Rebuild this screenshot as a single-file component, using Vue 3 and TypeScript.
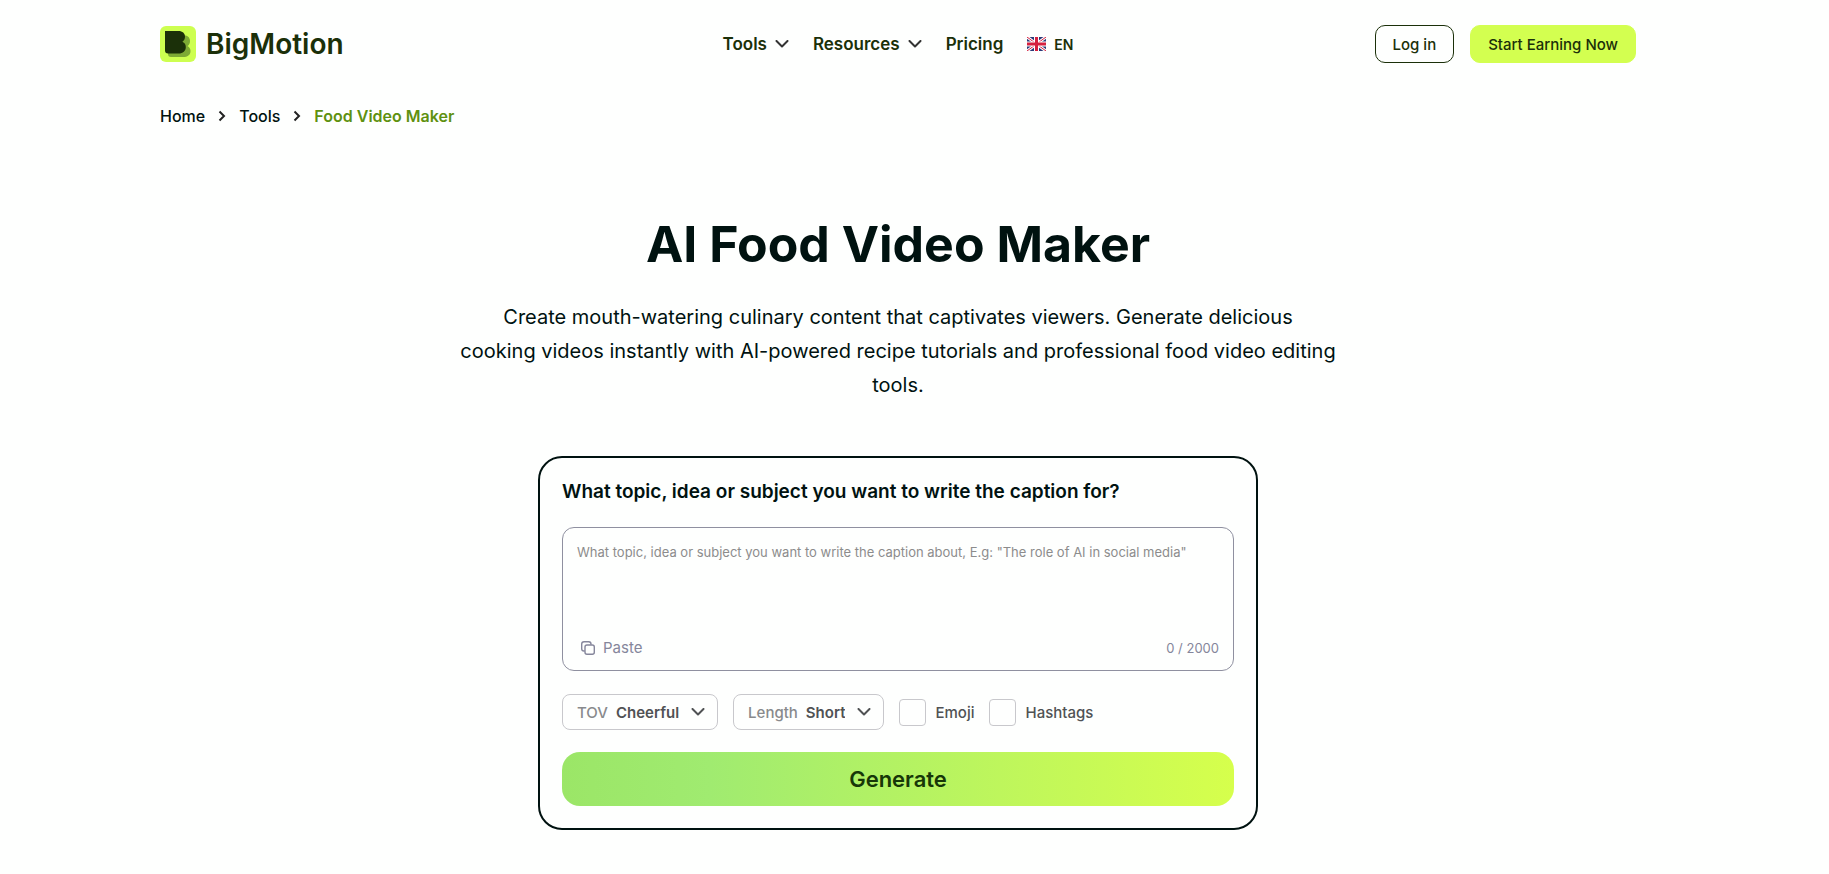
<script setup lang="ts">
import { ref } from 'vue'

const topic = ref('')
const tone = ref('Cheerful')
const captionLength = ref('Short')
const emoji = ref(false)
const hashtags = ref(false)
const maxLength = 2000

const tones = ['Cheerful', 'Formal', 'Witty']
const lengths = ['Short', 'Medium', 'Long']

async function paste() {
  topic.value = (await navigator.clipboard.readText()).slice(0, maxLength)
}
</script>

<template>
  <div class="page">
    <header class="header">
      <a class="brand" href="#">
        <svg class="brand-mark" viewBox="0 0 36 36" aria-hidden="true">
          <rect width="36" height="36" rx="6" fill="#cdff50" />
          <path d="M8 9H22C27 9 30 11 30 15C30 17.500 29 19 27.500 20C29.500 21 30.500 23 30.500 25C30.500 29 27.500 31 23 31H11Q8 31 8 28Z" fill="#7daa35" />
          <path d="M5 5H18.500C22.500 5 25 7.200 25 10.800C25 13 24 14.800 22.400 15.800C24.600 16.800 25.800 18.700 25.800 21C25.800 25 22.900 27.500 18.600 27.500H8Q5 27.500 5 24.500Z" fill="#1b3009" />
        </svg>
        <span>BigMotion</span>
      </a>

      <nav class="nav" aria-label="Main">
        <button class="nav-item" type="button">
          Tools
          <svg class="chevron" viewBox="0 0 14 8" aria-hidden="true"><path d="M1.500 1L7 6.500L12.500 1" /></svg>
        </button>
        <button class="nav-item" type="button">
          Resources
          <svg class="chevron" viewBox="0 0 14 8" aria-hidden="true"><path d="M1.500 1L7 6.500L12.500 1" /></svg>
        </button>
        <a class="nav-item" href="#">Pricing</a>
        <button class="language" type="button">
          <svg class="flag" viewBox="0 0 19 14" aria-hidden="true">
            <rect width="19" height="14" fill="#2b3a78" />
            <path d="M0 0L19 14M19 0L0 14" stroke="#fff" stroke-width="3" />
            <path d="M0 0L19 14M19 0L0 14" stroke="#d5203f" stroke-width="1" />
            <path d="M9.500 0V14M0 7H19" stroke="#fff" stroke-width="5" />
            <path d="M9.500 0V14M0 7H19" stroke="#d5203f" stroke-width="3" />
          </svg>
          EN
        </button>
      </nav>

      <div class="account">
        <a class="button button-outline" href="#">Log in</a>
        <a class="button button-filled" href="#">Start Earning Now</a>
      </div>
    </header>

    <nav class="breadcrumb" aria-label="Breadcrumb">
      <a href="#">Home</a>
      <svg viewBox="0 0 8 12" aria-hidden="true"><path d="M1.500 1.500L6 6L1.500 10.500" /></svg>
      <a href="#">Tools</a>
      <svg viewBox="0 0 8 12" aria-hidden="true"><path d="M1.500 1.500L6 6L1.500 10.500" /></svg>
      <a class="current" href="#" aria-current="page">Food Video Maker</a>
    </nav>

    <main class="main">
      <h1>AI Food Video Maker</h1>
      <p class="lead">
        Create mouth-watering culinary content that captivates viewers. Generate delicious<br />
        cooking videos instantly with AI-powered recipe tutorials and professional food video editing
        tools.
      </p>

      <form class="card" @submit.prevent>
        <label class="card-title" for="topic">What topic, idea or subject you want to write the caption for?</label>

        <div class="editor">
          <textarea
            id="topic"
            v-model="topic"
            :maxlength="maxLength"
            placeholder="What topic, idea or subject you want to write the caption about, E.g: &quot;The role of AI in social media&quot;"
          ></textarea>
          <div class="editor-footer">
            <button class="paste" type="button" @click="paste">
              <svg viewBox="0 0 14 14" aria-hidden="true">
                <rect x="4" y="4" width="9.300" height="9.300" rx="2" />
                <path d="M3.800 10H3Q.7 10 .7 7.700V3Q.7 .7 3 .7H7.700Q10 .7 10 3V3.800" />
              </svg>
              Paste
            </button>
            <span class="count">{{ topic.length }} / {{ maxLength }}</span>
          </div>
        </div>

        <div class="options">
          <div class="dropdown">
            <label for="tone">TOV</label>
            <select id="tone" v-model="tone">
              <option v-for="item in tones" :key="item">{{ item }}</option>
            </select>
            <svg class="chevron" viewBox="0 0 14 8" aria-hidden="true"><path d="M1.500 1L7 6.500L12.500 1" /></svg>
          </div>
          <div class="dropdown">
            <label for="length">Length</label>
            <select id="length" v-model="captionLength">
              <option v-for="item in lengths" :key="item">{{ item }}</option>
            </select>
            <svg class="chevron" viewBox="0 0 14 8" aria-hidden="true"><path d="M1.500 1L7 6.500L12.500 1" /></svg>
          </div>
          <label class="check"><input v-model="emoji" type="checkbox" />Emoji</label>
          <label class="check"><input v-model="hashtags" type="checkbox" />Hashtags</label>
        </div>

        <button class="generate" type="submit">Generate</button>
      </form>
    </main>
  </div>
</template>

<style>
body {
  margin: 0;
  background: #fefffe;
}
</style>

<style scoped>
.page {
  box-sizing: border-box;
  padding: 24px 193px 40px 160px;
  color: #001210;
  font-family: Inter, "Liberation Sans", sans-serif;
}
.page * {
  box-sizing: border-box;
}
a {
  color: inherit;
  text-decoration: none;
}
button,
select,
textarea {
  padding: 0;
  border: 0;
  background: none;
  color: inherit;
  font: inherit;
}
button {
  cursor: pointer;
}
.header {
  display: grid;
  grid-template-columns: 1fr auto 1fr;
  align-items: center;
  height: 40px;
  color: #1b3009;
}
.brand {
  display: flex;
  align-items: center;
  gap: 10px;
  font-size: 28px;
  font-weight: 600;
}
.brand-mark {
  width: 36px;
  height: 36px;
}
.nav {
  display: flex;
  align-items: center;
  gap: 24px;
}
.nav-item {
  display: flex;
  align-items: center;
  gap: 8px;
  font-size: 17px;
  font-weight: 600;
}
.chevron {
  width: 14px;
  height: 8px;
  flex: none;
  fill: none;
  stroke: #333;
  stroke-width: 2;
  stroke-linecap: round;
  stroke-linejoin: round;
}
.language {
  display: flex;
  align-items: center;
  gap: 8px;
  font-size: 14px;
  font-weight: 600;
}
.flag {
  width: 19px;
  height: 14px;
}
.account {
  display: flex;
  justify-content: flex-end;
  gap: 16px;
}
.button {
  display: flex;
  align-items: center;
  height: 38px;
  padding: 0 17px;
  border: 1px solid #1b3009;
  border-radius: 10px;
  font-size: 15px;
  font-weight: 500;
}
.button-filled {
  border-color: #d3ff50;
  background: #d3ff50;
}
.breadcrumb {
  display: flex;
  align-items: center;
  gap: 13px;
  margin-top: 42px;
  font-size: 16px;
  font-weight: 500;
  line-height: 20px;
}
.breadcrumb svg {
  width: 8px;
  height: 12px;
  fill: none;
  stroke: #222;
  stroke-width: 2;
}
.current {
  color: #5e9110;
  font-weight: 600;
}
.main {
  display: flex;
  flex-direction: column;
  align-items: center;
}
h1 {
  margin: 82px 0 0;
  font-size: 50px;
  font-weight: 700;
  line-height: 72px;
  text-align: center;
}
.lead {
  max-width: 900px;
  margin: 20px 0 0;
  font-size: 20px;
  line-height: 34px;
  text-align: center;
}
.card {
  display: flex;
  flex-direction: column;
  width: 100%;
  max-width: 720px;
  margin-top: 54px;
  padding: 22px;
  border: 2px solid #001210;
  border-radius: 24px;
}
.card-title {
  font-size: 19px;
  font-weight: 600;
  line-height: 24px;
}
.editor {
  display: flex;
  flex-direction: column;
  height: 144px;
  margin-top: 23px;
  border: 1px solid #8f90a0;
  border-radius: 12px;
}
textarea {
  flex: 1;
  padding: 14px;
  outline: none;
  font-size: 13px;
  line-height: 20px;
  resize: none;
}
textarea::placeholder {
  color: #8c8c8c;
}
.editor-footer {
  display: flex;
  align-items: center;
  justify-content: space-between;
  padding: 0 14px 12px 18px;
  color: #85869b;
  line-height: 20px;
}
.paste {
  display: flex;
  align-items: center;
  gap: 8px;
  font-size: 15px;
}
.paste svg {
  width: 14px;
  height: 14px;
  fill: none;
  stroke: currentColor;
  stroke-width: 1.4;
}
.count {
  font-size: 13px;
}
.options {
  display: flex;
  flex-wrap: wrap;
  align-items: center;
  gap: 15px;
  margin-top: 23px;
  color: #505254;
  font-size: 15px;
  font-weight: 500;
}
.dropdown {
  display: flex;
  align-items: center;
  height: 36px;
  padding: 0 12px 0 14px;
  border: 1px solid #c8c8cc;
  border-radius: 8px;
}
.dropdown label {
  margin-right: 8px;
  color: #888a8c;
}
.dropdown .chevron {
  margin-left: -14px;
  stroke: #505254;
  pointer-events: none;
}
select {
  padding-right: 26px;
  appearance: none;
  field-sizing: content;
  font-weight: 600;
  outline: none;
}
.check {
  display: flex;
  align-items: center;
  gap: 9px;
}
.check input {
  width: 27px;
  height: 27px;
  margin: 0;
  border: 1px solid #c8c8cc;
  border-radius: 4px;
  appearance: none;
}
.check input:checked {
  background: #d3ff50;
}
.generate {
  height: 54px;
  margin-top: 22px;
  border-radius: 18px;
  background: linear-gradient(90deg, #9be667 0%, #a0eb70 22%, #d6ff4c 100%);
  color: #173708;
  font-size: 22px;
  font-weight: 600;
}
</style>
